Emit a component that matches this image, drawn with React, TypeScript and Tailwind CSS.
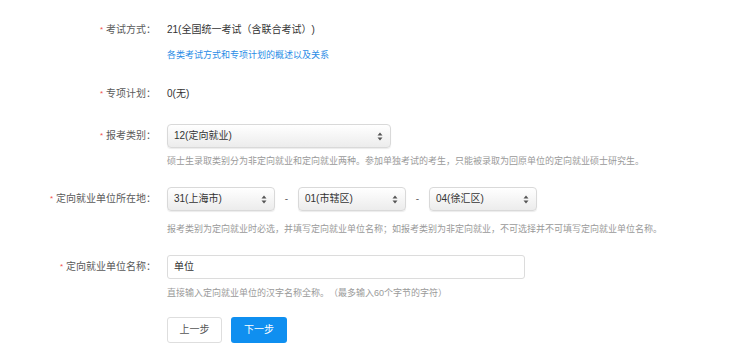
import React from "react";

function Arrows() {
  return (
    <svg width="6" height="9" viewBox="0 0 6 9" className="shrink-0">
      <path d="M3 0.5 L5.5 3.5 L0.5 3.5 Z" fill="#555" />
      <path d="M3 8.5 L5.5 5.5 L0.5 5.5 Z" fill="#555" />
    </svg>
  );
}

function Select({ value, width }: { value: string; width: string }) {
  return (
    <div
      className={`${width} h-[24px] flex items-center justify-between pl-[6px] pr-[7px] rounded-[4px] border border-[#d9d9d9] bg-gradient-to-b from-white to-[#ececec] shadow-[0_1px_1px_rgba(0,0,0,0.08)] text-[10px] text-[#333]`}
    >
      <span>{value}</span>
      <Arrows />
    </div>
  );
}

function Label({ text }: { text: string }) {
  return (
    <div className="w-[156px] shrink-0 text-right text-[10px] text-[#5a5a5a]">
      <span className="text-[#f05050] text-[8px] mr-[3px] align-top">*</span>
      {text}：
    </div>
  );
}

function Spacer() {
  return <div className="w-[156px] shrink-0" />;
}

export default function App() {
  return (
    <div lang="zh-CN" className="w-[750px] h-[362px] bg-white font-['Liberation_Sans','Noto_Sans_CJK_SC',sans-serif] leading-[14px] overflow-hidden [text-spacing-trim:space-all]">
      <div className="pt-[23px]">
        {/* 考试方式 */}
        <div className="flex gap-[11px]">
          <Label text="考试方式" />
          <div>
            <div className="text-[10px] text-[#333]">21(全国统一考试（含联合考试）)</div>
            <div className="mt-[11px] text-[9px] text-[#2a8ce6]">各类考试方式和专项计划的概述以及关系</div>
          </div>
        </div>

        {/* 专项计划 */}
        <div className="flex gap-[11px] mt-[25px]">
          <Label text="专项计划" />
          <div className="text-[10px] text-[#333]">0(无)</div>
        </div>

        {/* 报考类别 */}
        <div className="flex items-center gap-[11px] mt-[23px]">
          <Label text="报考类别" />
          <Select value="12(定向就业)" width="w-[224px]" />
        </div>
        <div className="flex gap-[11px] mt-[7px]">
          <Spacer />
          <div className="text-[9px] leading-[13px] text-[#9a9a9a]">
            硕士生录取类别分为非定向就业和定向就业两种。参加单独考试的考生，只能被录取为回原单位的定向就业硕士研究生。
          </div>
        </div>

        {/* 定向就业单位所在地 */}
        <div className="flex items-center gap-[11px] mt-[19px]">
          <Label text="定向就业单位所在地" />
          <div className="flex items-center">
            <Select value="31(上海市)" width="w-[108px]" />
            <span className="w-[23px] text-center text-[10px] text-[#666]">-</span>
            <Select value="01(市辖区)" width="w-[108px]" />
            <span className="w-[23px] text-center text-[10px] text-[#666]">-</span>
            <Select value="04(徐汇区)" width="w-[108px]" />
          </div>
        </div>
        <div className="flex gap-[11px] mt-[12px]">
          <Spacer />
          <div className="text-[9px] leading-[13px] text-[#9a9a9a]">
            报考类别为定向就业时必选，并填写定向就业单位名称；如报考类别为非定向就业，不可选择并不可填写定向就业单位名称。
          </div>
        </div>

        {/* 定向就业单位名称 */}
        <div className="flex items-center gap-[11px] mt-[19px]">
          <Label text="定向就业单位名称" />
          <div className="w-[358px] h-[24px] flex items-center px-[6px] rounded-[3px] border border-[#dcdcdc] bg-white text-[10px] text-[#333]">
            单位
          </div>
        </div>
        <div className="flex gap-[11px] mt-[8px]">
          <Spacer />
          <div className="text-[9px] leading-[13px] text-[#9a9a9a]">
            直接输入定向就业单位的汉字名称全称。（最多输入60个字节的字符）
          </div>
        </div>

        {/* 按钮 */}
        <div className="flex gap-[11px] mt-[17px]">
          <Spacer />
          <div className="flex gap-[9px]">
            <button className="w-[55px] h-[26px] rounded-[3px] border border-[#dedede] bg-white text-[10px] text-[#555]">
              上一步
            </button>
            <button className="w-[56px] h-[26px] rounded-[3px] bg-[#0f8ff0] text-[10px] text-white">
              下一步
            </button>
          </div>
        </div>
      </div>
    </div>
  );
}
